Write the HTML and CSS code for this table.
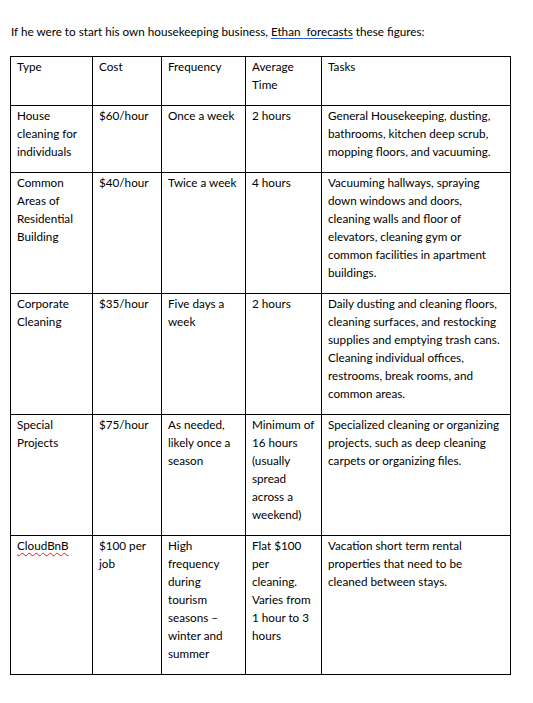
FILE: index.html
```html
<!DOCTYPE html>
<html>
<head>
<meta charset="utf-8">
<link rel="stylesheet" href="styles.css">
</head>
<body>
<div class="page">
  <p class="intro">If he were to start his own housekeeping business, <span class="grammar">Ethan&nbsp; forecasts</span> these figures:</p>
  <table class="grid">
    <colgroup>
      <col class="c-type"><col class="c-cost"><col class="c-freq"><col class="c-time"><col class="c-tasks">
    </colgroup>
    <tr>
      <td>Type</td><td>Cost</td><td>Frequency</td><td>Average<br>Time</td><td>Tasks</td>
    </tr>
    <tr>
      <td>House<br>cleaning for<br>individuals</td><td>$60/hour</td><td>Once a week</td><td>2 hours</td><td>General Housekeeping, dusting,<br>bathrooms, kitchen deep scrub,<br>mopping floors, and vacuuming.</td>
    </tr>
    <tr>
      <td>Common<br>Areas of<br>Residential<br>Building</td><td>$40/hour</td><td>Twice a week</td><td>4 hours</td><td>Vacuuming hallways, spraying<br>down windows and doors,<br>cleaning walls and floor of<br>elevators, cleaning gym or<br>common facilities in apartment<br>buildings.</td>
    </tr>
    <tr>
      <td>Corporate<br>Cleaning</td><td>$35/hour</td><td>Five days a<br>week</td><td>2 hours</td><td>Daily dusting and cleaning floors,<br>cleaning surfaces, and restocking<br>supplies and emptying trash cans.<br>Cleaning individual offices,<br>restrooms, break rooms, and<br>common areas.</td>
    </tr>
    <tr>
      <td>Special<br>Projects</td><td>$75/hour</td><td>As needed,<br>likely once a<br>season</td><td>Minimum of<br>16 hours<br>(usually<br>spread<br>across a<br>weekend)</td><td>Specialized cleaning or organizing<br>projects, such as deep cleaning<br>carpets or organizing files.</td>
    </tr>
    <tr>
      <td><span class="spell">CloudBnB</span></td><td>$100 per<br>job</td><td>High<br>frequency<br>during<br>tourism<br>seasons –<br>winter and<br>summer</td><td>Flat $100<br>per<br>cleaning.<br>Varies from<br>1 hour to 3<br>hours</td><td>Vacation short term rental<br>properties that need to be<br>cleaned between stays.</td>
    </tr>
  </table>
</div>
</body>
</html>
```
FILE: styles.css
```css
html, body {
  margin: 0;
  padding: 0;
  background: #ffffff;
}
.page {
  padding: 22px 0 0 10px;
  font-family: Lato, "Liberation Sans", sans-serif;
  font-size: 11.7px;
  line-height: 18px;
  color: #000000;
}
.intro {
  margin: 0 0 16px 1px;
}
.grammar {
  text-decoration: underline;
  text-decoration-color: #2f62c9;
  text-underline-offset: 2px;
}
.spell {
  text-decoration: underline wavy #e02020;
  text-decoration-skip-ink: none;
  text-underline-offset: 2px;
  text-decoration-thickness: 1px;
}
.grid {
  border-collapse: collapse;
  table-layout: fixed;
  width: 500px;
}
.c-type { width: 82px; }
.c-cost { width: 69px; }
.c-freq { width: 84px; }
.c-time { width: 76px; }
.c-tasks { width: 189px; }
.grid td {
  border: 1px solid #000000;
  vertical-align: top;
  white-space: nowrap;
  padding: 0 4px 12px 6px;
}
```
